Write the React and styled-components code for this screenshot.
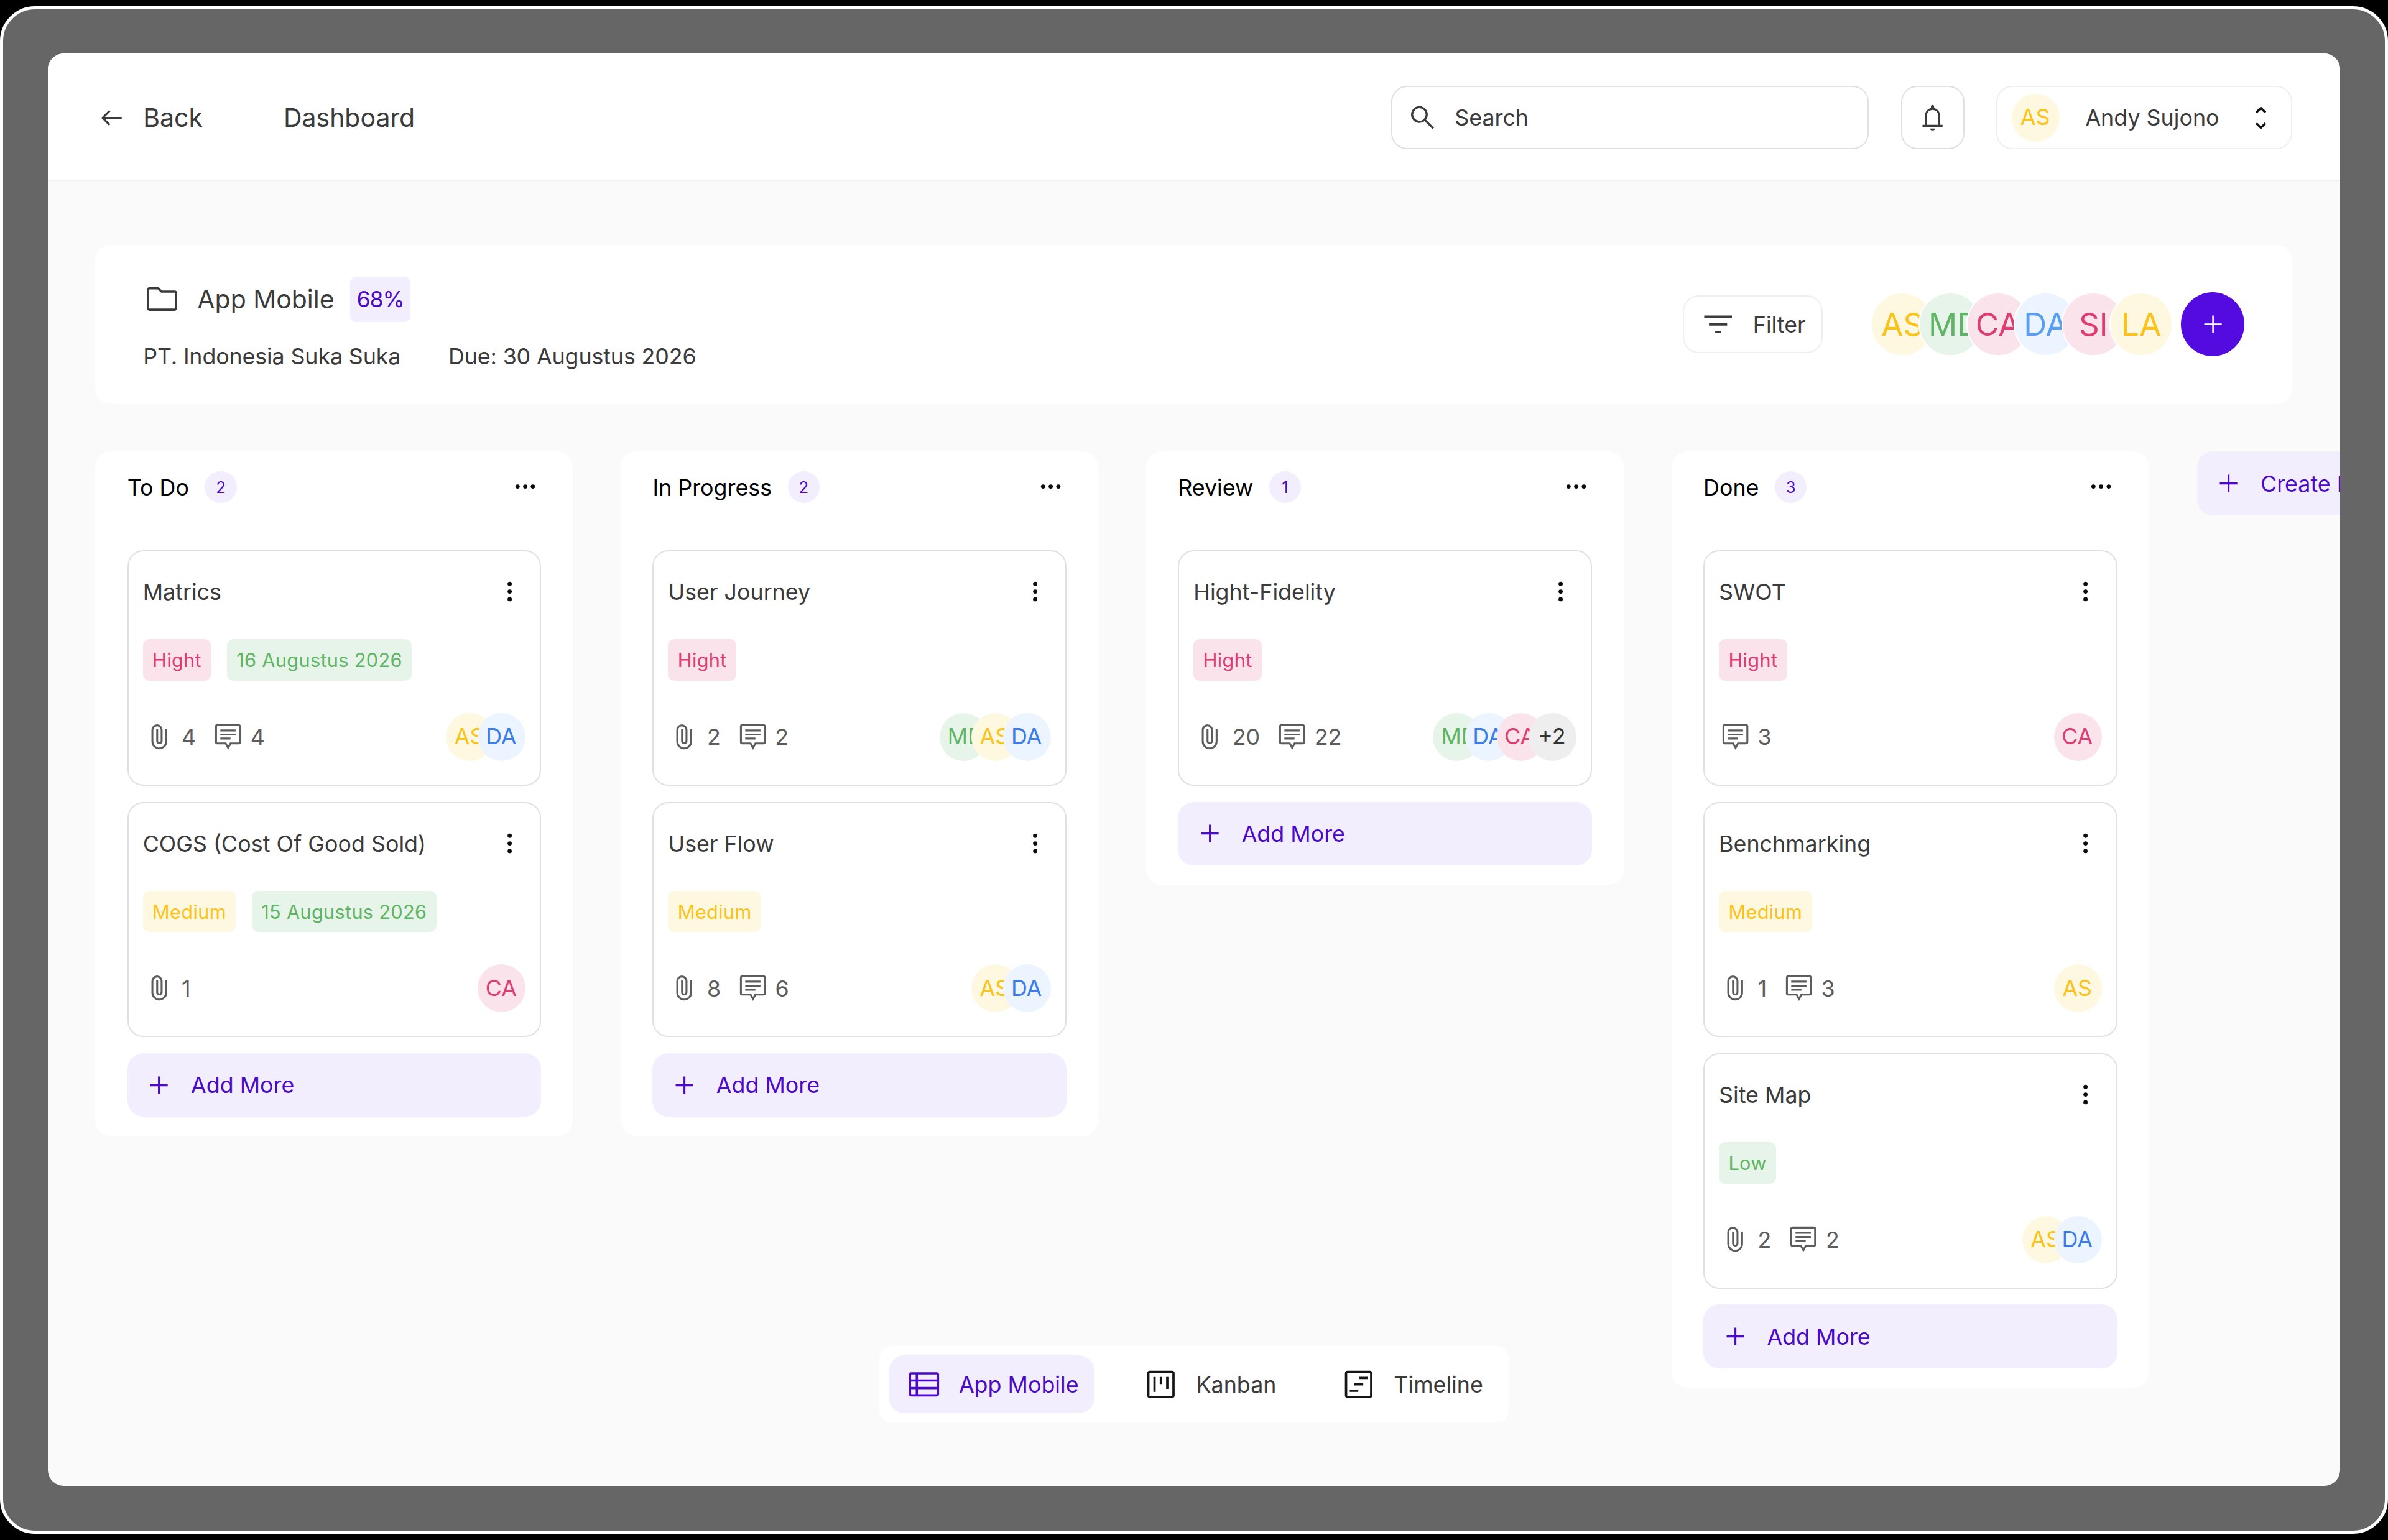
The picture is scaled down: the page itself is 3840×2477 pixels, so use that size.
import React from 'react';
import styled, { createGlobalStyle, css } from 'styled-components';

/* The layout is drawn on a 1500 × 960 grid; one grid unit is 2.56px. */
const u = (...n) => n.map((v) => `${+(v * 2.56).toFixed(3)}px`).join(' ');

const color = {
  ink: '#3B3B3B',
  soft: '#5C5C5C',
  purple: '#4B0AC8',
  purpleSolid: '#530BE0',
  purpleTint: '#F2EEFD',
  line: '#E0E0E0',
  lineSoft: '#EFEFEF',
};

const tones = {
  yellow: { bg: '#FFF8E1', fg: '#FBC21A' },
  green: { bg: '#E7F4E9', fg: '#5FB564' },
  pink: { bg: '#FBE3EB', fg: '#DF3C72' },
  blue: { bg: '#EBF4FF', fg: '#3A7CEB' },
  sky: { bg: '#EBF4FF', fg: '#5A9EF2' },
  grey: { bg: '#EEEEEE', fg: '#333333' },
};

const GlobalStyle = createGlobalStyle`
  * { box-sizing: border-box; }
  body {
    margin: 0;
    background: #000;
    overflow: hidden;
    font-family: Inter, "Liberation Sans", sans-serif;
    color: ${color.ink};
  }
  button {
    font: inherit;
    color: inherit;
    background: none;
    border: 0;
    padding: 0;
    margin: 0;
  }
`;

/* ---------- frame ---------- */

const Stage = styled.div`
  height: 2477px;
  display: flex;
  align-items: center;
  justify-content: center;
`;

const Bezel = styled.div`
  width: ${u(1500)};
  height: ${u(960)};
  padding: ${u(28)};
  border: ${u(2)} solid #fff;
  border-radius: ${u(22)};
  background: #666;
`;

const Screen = styled.div`
  position: relative;
  width: ${u(1440)};
  height: ${u(900)};
  border-radius: ${u(10)};
  overflow: hidden;
  background: #fafafa;
  display: flex;
  flex-direction: column;
`;

/* ---------- icons ---------- */

const Svg = styled.svg`
  display: block;
  flex: none;
  width: ${(p) => u(p.$size)};
  height: ${(p) => u(p.$size)};
  fill: none;
  stroke: currentColor;
  stroke-width: ${(p) => p.$stroke};
`;

const Icon = ({ size = 20, stroke = 1.3, children }) => (
  <Svg viewBox={`0 0 ${size} ${size}`} $size={size} $stroke={stroke} aria-hidden="true">
    {children}
  </Svg>
);

const ArrowIcon = () => (
  <Icon>
    <path d="M16.7 10H4.8M9.1 5.6 4.7 10l4.4 4.4" />
  </Icon>
);
const SearchIcon = () => (
  <Icon>
    <circle cx="8" cy="7.9" r="4.6" />
    <path d="m11.3 11.2 5.4 5.4" />
  </Icon>
);
const BellIcon = () => (
  <Icon stroke={1.2}>
    <path d="M5.85 14.9V8.5a4.15 4.15 0 0 1 8.3 0v6.4M3.7 15h12.6" />
    <path d="M9 4.1V2.9a1 1 0 0 1 2 0v1.2ZM8.5 16.7h3a1.5 1.2 0 0 1-3 0Z" fill="currentColor" stroke="none" />
  </Icon>
);
const UnfoldIcon = () => (
  <Icon stroke={1.4}>
    <path d="M7.1 6.6 10 3.8l2.9 2.8M7.1 13.4l2.9 2.8 2.9-2.8" stroke="#111" />
  </Icon>
);
const FolderIcon = () => (
  <Icon size={24} stroke={1.4}>
    <path d="M3.2 6.3c0-.5.4-.9.9-.9h5.5l2 2h8.2c.5 0 .9.4.9.9v9.6c0 .5-.4.9-.9.9H4.1a.9.9 0 0 1-.9-.9Z" />
  </Icon>
);
const FilterIcon = () => (
  <Icon size={24} stroke={1.5}>
    <path d="M3.3 7.2h17.4M6.3 12h11.4M10.2 16.8h3.6" />
  </Icon>
);
const PlusIcon = ({ stroke = 1.2 }) => (
  <Icon stroke={stroke}>
    <path d="M10 4.5v11M4.5 10h11" />
  </Icon>
);
const MoreIcon = ({ vertical }) => (
  <Icon>
    <g fill="#0c0c0c" stroke="none" transform={vertical ? 'rotate(90 10 10)' : undefined}>
      <circle cx="5.2" cy="10" r="1.35" />
      <circle cx="10" cy="10" r="1.35" />
      <circle cx="14.8" cy="10" r="1.35" />
    </g>
  </Icon>
);
const ClipIcon = () => (
  <Icon stroke={1.2}>
    <path d="M14.2 5.1v7.65a4.35 4.35 0 0 1-8.7 0V5.5a2.9 2.9 0 0 1 5.8 0v7a1.4 1.4 0 0 1-2.8 0V5.1" />
  </Icon>
);
const CommentIcon = () => (
  <Icon stroke={1.2}>
    <path d="M3.3 2.5h13.4c.45 0 .8.35.8.8v9.9c0 .45-.35.8-.8.8h-5.1L10.1 16.7 8.6 14H3.3a.8.8 0 0 1-.8-.8V3.3c0-.45.35-.8.8-.8Z" />
    <path d="M5.2 5.8h9.6M5.2 8.4h9.6M5.2 10.9h6.4" />
  </Icon>
);
const TableIcon = () => (
  <Icon size={24} stroke={1.4}>
    <rect x="3.2" y="5.1" width="17.6" height="13.8" rx=".9" />
    <path d="M7.5 5v14M3 9.6h18M3 14.3h18" />
  </Icon>
);
const KanbanIcon = () => (
  <Icon size={24} stroke={1.45}>
    <g stroke="#151515">
      <rect x="4.1" y="4.1" width="15.8" height="15.8" rx=".9" />
      <path d="M8 7.3v9.4M12 7.3v4.5M16 7.3v7.5" />
    </g>
  </Icon>
);
const TimelineIcon = () => (
  <Icon size={24} stroke={1.45}>
    <g stroke="#151515">
      <rect x="4.1" y="4.1" width="15.8" height="15.8" rx=".9" />
      <path d="M12.4 8h5.4M9.2 12h5.7M6.4 16h5.4" />
    </g>
  </Icon>
);

/* ---------- shared parts ---------- */

const Avatar = styled.span`
  flex: none;
  display: flex;
  align-items: center;
  justify-content: center;
  width: ${(p) => u(p.$large ? 40 : 30)};
  height: ${(p) => u(p.$large ? 40 : 30)};
  padding-right: ${(p) => (p.$large ? 0 : '2px')};
  border-radius: 50%;
  font-size: ${(p) => u(p.$large ? 20 : 14)};
  line-height: 1;
  white-space: nowrap;
  text-indent: ${(p) => (p.$wide ? '0.26em' : 0)};
  background: ${(p) => tones[p.$tone].bg};
  color: ${(p) => tones[p.$tone].fg};
  ${(p) => p.$large && css`border: ${u(1)} solid #fff;`}
`;

const AvatarStack = styled.div`
  display: flex;
  align-items: center;
  ${Avatar} + ${Avatar} { margin-left: ${u(-10)}; }
`;

const people = {
  AS: 'yellow', MD: 'green', CA: 'pink', DA: 'blue', '+2': 'grey',
};

/* ---------- header ---------- */

const Header = styled.header`
  flex: none;
  height: ${u(80)};
  padding: 3px ${u(30)} 0;
  display: flex;
  align-items: center;
  justify-content: space-between;
  background: #fff;
  border-bottom: ${u(1)} solid ${color.lineSoft};
`;

const Nav = styled.nav`
  display: flex;
  align-items: center;
  gap: ${u(50.8)};
  font-size: ${u(16)};
`;

const NavItem = styled.span`
  display: flex;
  align-items: center;
  gap: ${u(10)};
`;

const Tools = styled.div`
  display: flex;
  align-items: center;
  gap: ${u(20)};
  font-size: ${u(14)};
`;

const Outlined = styled.div`
  height: ${u(40)};
  display: flex;
  align-items: center;
  border: ${u(1)} solid ${(p) => (p.$soft ? color.lineSoft : color.line)};
  border-radius: ${u(10)};
  background: #fff;
`;

const SearchBox = styled(Outlined)`
  width: ${u(300)};
  padding: ${u(0, 9)};
  gap: ${u(10)};
`;

const BellButton = styled(Outlined)`
  width: ${u(40)};
  justify-content: center;
`;

const UserMenu = styled(Outlined)`
  width: ${u(186)};
  padding: ${u(0, 9)};
  justify-content: space-between;
`;

/* ---------- project summary ---------- */

const Main = styled.main`
  flex: 1;
  padding: ${u(40, 0, 0, 30)};
  display: flex;
  flex-direction: column;
  gap: ${u(30)};
`;

const Summary = styled.section`
  flex: none;
  width: ${u(1380)};
  height: ${u(100)};
  padding: ${u(0, 30)};
  display: flex;
  align-items: center;
  justify-content: space-between;
  border-radius: ${u(10)};
  background: #fff;
`;

const Details = styled.div`
  display: flex;
  flex-direction: column;
  gap: ${u(13.4)};
  padding-bottom: ${u(1.2)};
`;

const TitleRow = styled.div`
  display: flex;
  align-items: center;
  gap: ${u(10)};
  height: ${u(28.5)};
  font-size: ${u(16)};
`;

const Percent = styled.span`
  display: flex;
  align-items: center;
  height: ${u(28.5)};
  padding: ${u(0, 4)};
  border-radius: ${u(4)};
  font-size: ${u(14)};
  letter-spacing: -0.03em;
  color: ${color.purple};
  background: ${color.purpleTint};
`;

const MetaRow = styled.div`
  display: flex;
  gap: ${u(30)};
  font-size: ${u(14)};
  line-height: ${u(17)};
  letter-spacing: -0.004em;
`;

const SummaryTools = styled.div`
  display: flex;
  align-items: center;
  gap: ${u(30)};
`;

const FilterButton = styled(Outlined)`
  height: ${u(36)};
  padding: ${u(0, 10, 0, 9.3)};
  gap: ${u(10)};
  font-size: ${u(14)};
`;

const Team = styled.div`
  display: flex;
  align-items: center;
  gap: ${u(5)};
`;

const RoundButton = styled.button`
  width: ${u(40)};
  height: ${u(40)};
  border-radius: 50%;
  display: flex;
  align-items: center;
  justify-content: center;
  background: ${color.purpleSolid};
  color: #fff;
`;

/* ---------- board ---------- */

const Board = styled.section`
  display: flex;
  align-items: flex-start;
  gap: ${u(30)};
`;

const Column = styled.section`
  flex: none;
  width: ${u(300)};
  padding: ${u(12, 20)};
  border-radius: ${u(10)};
  background: #fff;
  display: flex;
  flex-direction: column;
  gap: ${u(10)};
`;

const ColumnHead = styled.header`
  display: flex;
  align-items: center;
  justify-content: space-between;
  height: ${u(20)};
  margin-bottom: ${u(20)};
`;

const ColumnTitle = styled.div`
  display: flex;
  align-items: center;
  gap: ${u(10)};
  padding-top: 2px;
  font-size: ${u(14)};
  color: #000;
`;

const Count = styled.span`
  width: ${u(20)};
  height: ${u(20)};
  border-radius: 50%;
  display: flex;
  align-items: center;
  justify-content: center;
  font-size: ${u(10)};
  color: ${color.purple};
  background: ${color.purpleTint};
`;

const Card = styled.article`
  height: ${u(148)};
  padding: ${u(15, 9)};
  border: ${u(1)} solid ${color.line};
  border-radius: ${u(10)};
  display: flex;
  flex-direction: column;
  justify-content: space-between;
`;

const CardHead = styled.div`
  height: ${u(20)};
  padding-top: 2px;
  display: flex;
  align-items: center;
  justify-content: space-between;
  font-size: ${u(14)};
`;

const Tags = styled.div`
  display: flex;
  gap: ${u(10)};
`;

const Tag = styled.span`
  height: ${u(26)};
  padding: ${u(0, 6)};
  border-radius: ${u(4)};
  display: flex;
  align-items: center;
  font-size: ${u(12)};
  letter-spacing: 0.01em;
  background: ${(p) => tones[p.$tone].bg};
  color: ${(p) => tones[p.$tone].fg};
`;

const CardFoot = styled.div`
  height: ${u(30)};
  display: flex;
  align-items: center;
  justify-content: space-between;
`;

const Stats = styled.div`
  display: flex;
  gap: ${u(10.2)};
  padding-left: 1px;
  color: ${color.soft};
  font-size: ${u(14)};
`;

const Stat = styled.span`
  display: flex;
  align-items: center;
  gap: ${u(4)};
`;

const TintButton = styled.button`
  flex: none;
  height: ${u(40)};
  padding: ${u(0, 10)};
  border-radius: ${u(10)};
  display: flex;
  align-items: center;
  gap: ${u(10)};
  font-size: ${u(14)};
  white-space: nowrap;
  color: ${color.purple};
  background: ${color.purpleTint};
`;

/* ---------- view switcher, floats over the board ---------- */

const Switcher = styled.nav`
  position: absolute;
  bottom: ${u(40)};
  left: 50%;
  transform: translateX(-50%);
  display: flex;
  gap: ${u(19.8)};
  padding: ${u(6)};
  border-radius: ${u(8)};
  background: #fff;
`;

const Tab = styled.button`
  height: ${u(36)};
  padding: ${u(0, 10)};
  border-radius: ${u(10)};
  display: flex;
  align-items: center;
  gap: ${u(10)};
  font-size: ${u(14)};
  color: ${(p) => (p.$active ? color.purple : color.ink)};
  background: ${(p) => (p.$active ? color.purpleTint : 'transparent')};
`;

/* ---------- data ---------- */

const priorityTone = { Hight: 'pink', Medium: 'yellow', Low: 'green' };

const team = [
  ['AS', 'yellow'], ['MD', 'green'], ['CA', 'pink'], ['DA', 'sky'], ['SI', 'pink'], ['LA', 'yellow'],
];

const columns = [
  {
    title: 'To Do',
    cards: [
      { title: 'Matrics', priority: 'Hight', date: '16 Augustus 2026', files: 4, comments: 4, who: ['AS', 'DA'] },
      { title: 'COGS (Cost Of Good Sold)', priority: 'Medium', date: '15 Augustus 2026', files: 1, who: ['CA'] },
    ],
  },
  {
    title: 'In Progress',
    cards: [
      { title: 'User Journey', priority: 'Hight', files: 2, comments: 2, who: ['MD', 'AS', 'DA'] },
      { title: 'User Flow', priority: 'Medium', files: 8, comments: 6, who: ['AS', 'DA'] },
    ],
  },
  {
    title: 'Review',
    cards: [
      { title: 'Hight-Fidelity', priority: 'Hight', files: 20, comments: 22, who: ['MD', 'DA', 'CA', '+2'] },
    ],
  },
  {
    title: 'Done',
    cards: [
      { title: 'SWOT', priority: 'Hight', comments: 3, who: ['CA'] },
      { title: 'Benchmarking', priority: 'Medium', files: 1, comments: 3, who: ['AS'] },
      { title: 'Site Map', priority: 'Low', files: 2, comments: 2, who: ['AS', 'DA'] },
    ],
  },
];

const TaskCard = ({ title, priority, date, files, comments, who }) => (
  <Card>
    <CardHead>
      {title}
      <MoreIcon vertical />
    </CardHead>
    <Tags>
      <Tag $tone={priorityTone[priority]}>{priority}</Tag>
      {date && <Tag $tone="green">{date}</Tag>}
    </Tags>
    <CardFoot>
      <Stats>
        {files && <Stat><ClipIcon />{files}</Stat>}
        {comments && <Stat><CommentIcon />{comments}</Stat>}
      </Stats>
      <AvatarStack>
        {who.map((name) => (
          <Avatar key={name} $tone={people[name]} $wide={name === 'MD'}>{name}</Avatar>
        ))}
      </AvatarStack>
    </CardFoot>
  </Card>
);

export default function App() {
  return (
    <Stage>
      <GlobalStyle />
      <Bezel>
        <Screen>
          <Header>
            <Nav>
              <NavItem><ArrowIcon />Back</NavItem>
              <NavItem>Dashboard</NavItem>
            </Nav>
            <Tools>
              <SearchBox><SearchIcon />Search</SearchBox>
              <BellButton><BellIcon /></BellButton>
              <UserMenu $soft>
                <Avatar $tone="yellow">AS</Avatar>
                Andy Sujono
                <UnfoldIcon />
              </UserMenu>
            </Tools>
          </Header>
          <Main>
            <Summary>
              <Details>
                <TitleRow>
                  <FolderIcon />
                  App Mobile
                  <Percent>68%</Percent>
                </TitleRow>
                <MetaRow>
                  <span>PT. Indonesia Suka Suka</span>
                  <span>Due: 30 Augustus 2026</span>
                </MetaRow>
              </Details>
              <SummaryTools>
                <FilterButton $soft><FilterIcon />Filter</FilterButton>
                <Team>
                  <AvatarStack>
                    {team.map(([name, tone]) => (
                      <Avatar key={name} $large $tone={tone} $wide={name === 'MD'}>{name}</Avatar>
                    ))}
                  </AvatarStack>
                  <RoundButton aria-label="Add member"><PlusIcon stroke={1} /></RoundButton>
                </Team>
              </SummaryTools>
            </Summary>
            <Board>
              {columns.map((column) => (
                <Column key={column.title}>
                  <ColumnHead>
                    <ColumnTitle>
                      {column.title}
                      <Count>{column.cards.length}</Count>
                    </ColumnTitle>
                    <MoreIcon />
                  </ColumnHead>
                  {column.cards.map((card) => <TaskCard key={card.title} {...card} />)}
                  <TintButton><PlusIcon />Add More</TintButton>
                </Column>
              ))}
              <TintButton><PlusIcon />Create Board</TintButton>
            </Board>
          </Main>
          <Switcher>
            <Tab $active><TableIcon />App Mobile</Tab>
            <Tab><KanbanIcon />Kanban</Tab>
            <Tab><TimelineIcon />Timeline</Tab>
          </Switcher>
        </Screen>
      </Bezel>
    </Stage>
  );
}
